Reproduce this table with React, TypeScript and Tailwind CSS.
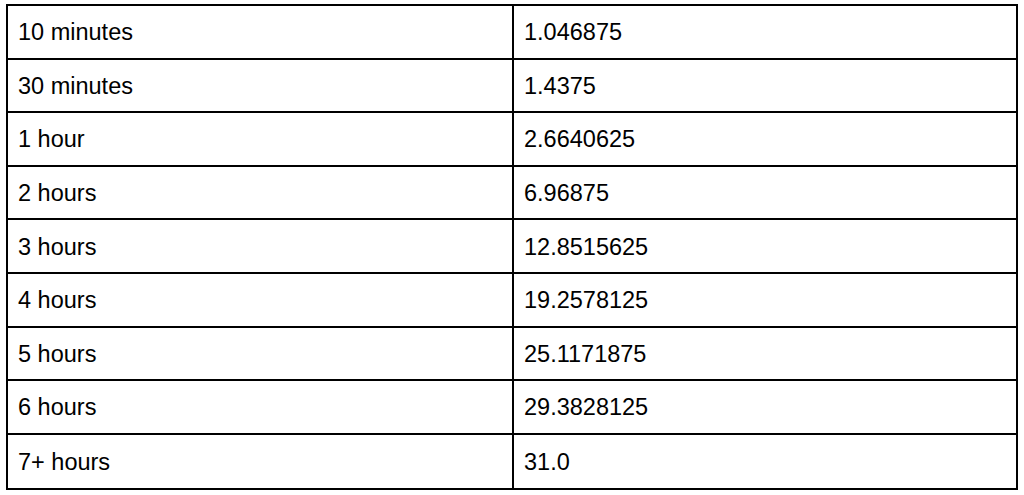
const rows: [string, string][] = [
  ["10 minutes", "1.046875"],
  ["30 minutes", "1.4375"],
  ["1 hour", "2.6640625"],
  ["2 hours", "6.96875"],
  ["3 hours", "12.8515625"],
  ["4 hours", "19.2578125"],
  ["5 hours", "25.1171875"],
  ["6 hours", "29.3828125"],
  ["7+ hours", "31.0"],
];

export default function App() {
  return (
    <div className="w-[1024px] h-[495px] bg-white pt-[4px] pl-[6px]" style={{ fontFamily: '"Liberation Sans", Arial, sans-serif' }}>
      <div className="w-[1012px] border-2 border-black flex flex-col">
        {rows.map(([a, b], i) => (
          <div
            key={a}
            className={`flex h-[53.6px] ${i < rows.length - 1 ? "border-b-2 border-black" : ""}`}
          >
            <div className="w-[506px] border-r-2 border-black flex items-center pl-[10px] pt-[2px] text-[23.5px] text-black">
              {a}
            </div>
            <div className="flex-1 flex items-center pl-[10px] pt-[2px] text-[23.5px] text-black">{b}</div>
          </div>
        ))}
      </div>
    </div>
  );
}
